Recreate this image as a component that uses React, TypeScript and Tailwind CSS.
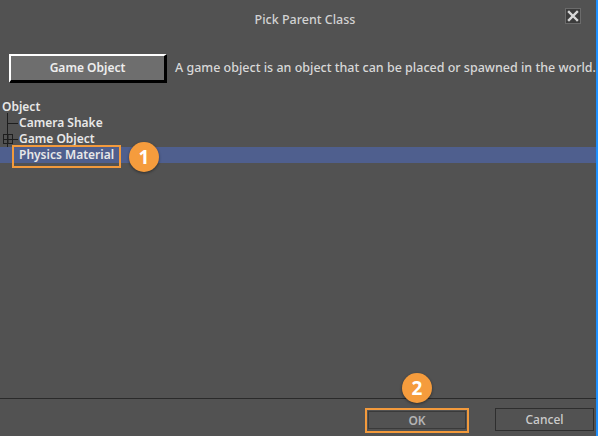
import React from "react";

const tree = [
  { label: "Object", indent: 2 },
  { label: "Camera Shake", indent: 19 },
  { label: "Game Object", indent: 19 },
  { label: "Physics Material", indent: 19, selected: true },
];

function Badge({ n, className }: { n: number; className: string }) {
  return (
    <div className={`absolute flex h-[30px] w-[30px] items-center justify-center rounded-full bg-[#f59c3d] text-[19px] font-bold text-white shadow-[0_1px_3px_rgba(0,0,0,0.45)] ${className}`}>
      {n}
    </div>
  );
}

export default function App() {
  return (
    <div className="relative flex h-[436px] w-[598px] flex-col overflow-hidden border-r-2 border-[#1e90ff] bg-[#525252] text-[12px] text-[#d6d6d6] [font-family:'Noto_Sans',sans-serif]">
      <header className="relative flex h-[40px] items-center justify-center pl-[14px]">
        <span className="text-[12.5px] font-medium text-[#d2d2d2]">Pick Parent Class</span>
        <button className="absolute left-[565px] top-[8px] flex h-[16px] w-[16px] items-center justify-center border border-[#6b6b6b] bg-[#3c3c3c]">
          <svg width="12" height="12" viewBox="0 0 12 12">
            <path d="M2 2 L10 10 M10 2 L2 10" stroke="#d8d8d8" strokeWidth="2.4" strokeLinecap="square" />
          </svg>
        </button>
      </header>

      <section className="mt-[14px] flex items-center gap-[8px] pl-[9px]">
        <button className="h-[29px] w-[159px] border-l-2 border-t-2 border-b-[3px] border-r-[3px] border-l-white border-t-white border-b-black border-r-black bg-[#6e6e6e] text-[12px] font-semibold text-[#eeeeee]">
          Game Object
        </button>
        <p className="whitespace-nowrap text-[12.5px] font-medium text-[#d8d8d8]">A game object is an object that can be placed or spawned in the world.</p>
      </section>

      <div className="relative mt-[16px] font-semibold text-[#e8e8e8]">
        {/* connector lines */}
        <svg className="absolute left-0 top-0" width="20" height="64" viewBox="0 0 20 64">
          <path d="M7.5 14 V62" stroke="#1e1e1e" strokeWidth="1" />
          <path d="M7.5 24.5 H18" stroke="#1e1e1e" strokeWidth="1" />
          <rect x="3.5" y="35.5" width="9" height="9" fill="none" stroke="#1e1e1e" strokeWidth="1" />
          <path d="M3.5 40.5 H18 M8 36 V45" stroke="#1e1e1e" strokeWidth="1" />
        </svg>
        {tree.map((item) => (
          <div key={item.label} className={`relative flex h-[16px] items-center ${item.selected ? "bg-[#4f5f8e]" : ""}`} style={{ paddingLeft: item.indent }}>
            <span className="leading-none">{item.label}</span>
            {item.selected ? <div className="absolute left-[12px] top-[-2px] h-[23px] w-[109px] border-2 border-[#f39a3c]" /> : null}
          </div>
        ))}
      </div>

      <div className="flex-1" />

      <footer className="flex h-[38px] items-start justify-end gap-[26px] border-t border-[#2a2a2a] pr-[2px] pt-[9px]">
        <div className="border-2 border-[#f39a3c] p-px">
          <button className="h-[18px] w-[98px] border border-[#3a3a3a] text-[12px] font-semibold text-[#b4b4b4]">OK</button>
        </div>
        <button className="h-[23px] w-[99px] border border-[#2e2e2e] text-[12px] font-medium text-[#cccccc]">Cancel</button>
      </footer>

      <Badge n={1} className="left-[129px] top-[142px]" />
      <Badge n={2} className="left-[402px] top-[373px]" />
    </div>
  );
}
